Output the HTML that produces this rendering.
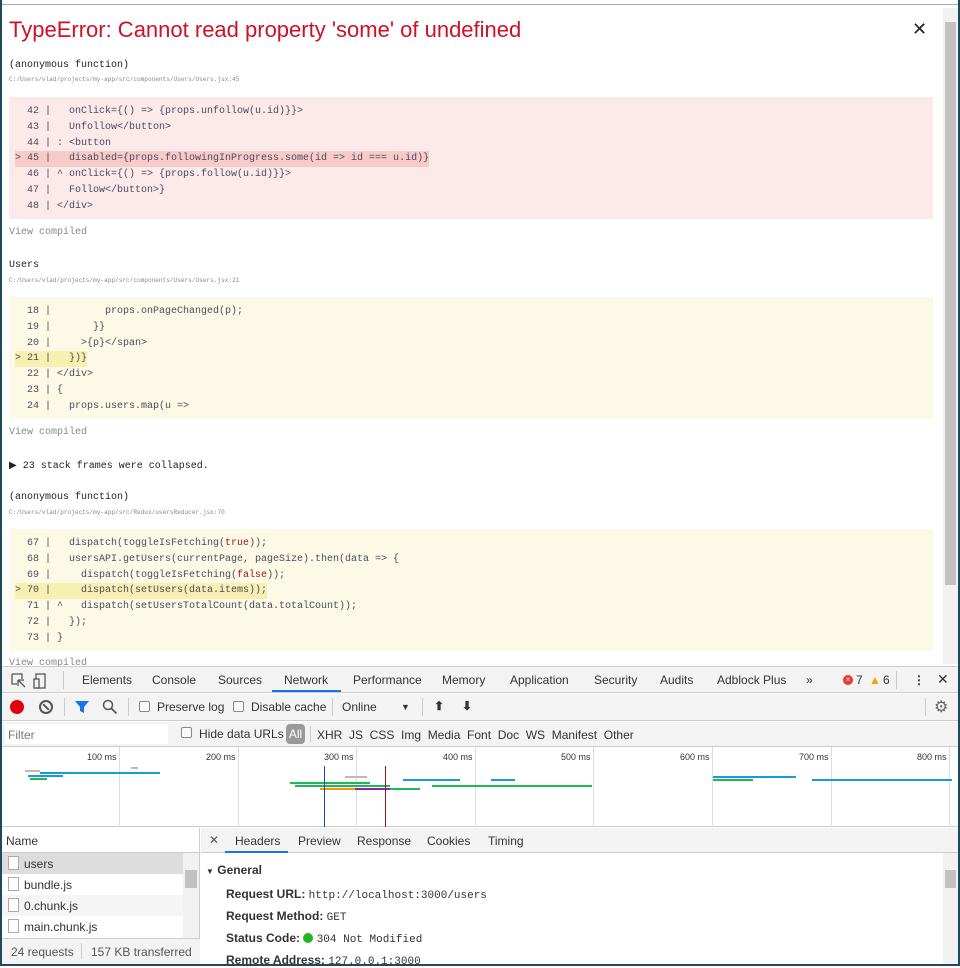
<!DOCTYPE html>
<html><head><meta charset="utf-8"><style>
*{margin:0;padding:0;box-sizing:border-box}
body{width:960px;height:966px;overflow:hidden;background:#fff;font-family:"Liberation Sans",sans-serif;position:relative}
.a{position:absolute}
.m{font-family:"Liberation Mono",monospace;white-space:pre}
.code{position:absolute;left:9px;width:924px;height:122px;padding-top:7px;font-size:10px;line-height:15.8px;color:#4b4b5c;font-family:"Liberation Mono",monospace}
.code div{height:15.8px;padding-left:6px;white-space:pre}
.hl{display:inline-block}
.pink{background:#fce9e9}.pink .hl{background:#f8caca}
.yel{background:#fcfae6}.yel .hl{background:#f8f0b2}
.k{color:#a31515}
.fn{font-size:10px;color:#222}
.path{font-size:6.1px;color:#888}
.vc{font-size:10px;color:#888}
.tab{position:absolute;top:673px;font-size:12px;color:#333}
.t2{font-size:12px;color:#333;position:absolute}
.bar{position:absolute;height:2px}
</style></head><body>
<div class="a" style="left:0;top:4px;width:960px;height:1px;background:#aaa"></div>
<div class="a" style="left:0;top:0;width:2px;height:966px;background:#1d4a5c"></div>
<div class="a" style="right:0;top:0;width:2px;height:966px;background:#1d4a5c"></div>
<div class="a" style="left:943px;top:8px;width:15px;height:656px;background:#f1f1f1"></div>
<div class="a" style="left:945px;top:22px;width:11px;height:563px;background:#c1c1c1"></div>
<div class="a" style="left:9px;top:17px;font-size:22px;color:#ce1126">TypeError: Cannot read property 'some' of undefined</div>
<div class="a" style="left:912px;top:19px;font-size:18px;color:#222">✕</div>

<div class="a m fn" style="left:9px;top:60px">(anonymous function)</div>
<div class="a m path" style="left:9px;top:76px">C:/Users/vlad/projects/my-app/src/components/Users/Users.jsx:45</div>
<div class="code pink" style="top:97px"><div>  42 |   onClick={() =&gt; {props.unfollow(u.id)}}&gt;</div><div>  43 |   Unfollow&lt;/button&gt;</div><div>  44 | : &lt;button</div><div><span class="hl">&gt; 45 |   disabled={props.followingInProgress.some(id =&gt; id === u.id)}</span></div><div>  46 | ^ onClick={() =&gt; {props.follow(u.id)}}&gt;</div><div>  47 |   Follow&lt;/button&gt;}</div><div>  48 | &lt;/div&gt;</div></div>
<div class="a m vc" style="left:9px;top:227px">View compiled</div>

<div class="a m fn" style="left:9px;top:260px">Users</div>
<div class="a m path" style="left:9px;top:277px">C:/Users/vlad/projects/my-app/src/components/Users/Users.jsx:21</div>
<div class="code yel" style="top:297px"><div>  18 |         props.onPageChanged(p);</div><div>  19 |       }}</div><div>  20 |     &gt;{p}&lt;/span&gt;</div><div><span class="hl">&gt; 21 |   })}</span></div><div>  22 | &lt;/div&gt;</div><div>  23 | {</div><div>  24 |   props.users.map(u =&gt;</div></div>
<div class="a m vc" style="left:9px;top:427px">View compiled</div>
<div class="a m fn" style="left:9px;top:460px">▶ 23 stack frames were collapsed.</div>

<div class="a m fn" style="left:9px;top:492px">(anonymous function)</div>
<div class="a m path" style="left:9px;top:509px">C:/Users/vlad/projects/my-app/src/Redux/usersReducer.jsx:70</div>
<div class="code yel" style="top:529px"><div>  67 |   dispatch(toggleIsFetching(<span class="k">true</span>));</div><div>  68 |   usersAPI.getUsers(currentPage, pageSize).then(data =&gt; {</div><div>  69 |     dispatch(toggleIsFetching(<span class="k">false</span>));</div><div><span class="hl">&gt; 70 |     dispatch(setUsers(data.items));</span></div><div>  71 | ^   dispatch(setUsersTotalCount(data.totalCount));</div><div>  72 |   });</div><div>  73 | }</div></div>
<div class="a m vc" style="left:9px;top:658px">View compiled</div>

<!-- devtools -->
<div class="a" style="left:2px;top:666px;width:956px;height:300px;background:#fff;border-top:1px solid #ccc"></div>
<div class="a" style="left:2px;top:667px;width:956px;height:26px;background:#f3f3f3;border-bottom:1px solid #ccc"></div>
<svg class="a" style="left:10px;top:672px" width="40" height="18"><path d="M2 2h10v5M2 2v10h5M8 8l7 7M8 8v6M8 8h6" stroke="#555" fill="none" stroke-width="1.3"/><rect x="26" y="2" width="9" height="14" fill="none" stroke="#555" stroke-width="1.3"/><rect x="24" y="7" width="5" height="9" fill="#f3f3f3" stroke="#555" stroke-width="1.3"/></svg>
<div class="a" style="left:63px;top:671px;width:1px;height:18px;background:#ccc"></div>
<div class="tab" style="left:82px">Elements</div>
<div class="tab" style="left:152px">Console</div>
<div class="tab" style="left:218px">Sources</div>
<div class="tab" style="left:284px">Network</div>
<div class="a" style="left:272px;top:690px;width:69px;height:2px;background:#1a73e8"></div>
<div class="tab" style="left:353px">Performance</div>
<div class="tab" style="left:442px">Memory</div>
<div class="tab" style="left:510px">Application</div>
<div class="tab" style="left:594px">Security</div>
<div class="tab" style="left:660px">Audits</div>
<div class="tab" style="left:717px">Adblock Plus</div>
<div class="tab" style="left:806px">»</div>
<div class="a" style="left:843px;top:675px;width:10px;height:10px;border-radius:50%;background:#e53935;color:#fff;font-size:8px;text-align:center;line-height:10px">×</div>
<div class="tab" style="left:856px">7</div>
<div class="tab" style="left:869px;color:#f2a600">▲</div><div class="tab" style="left:883px">6</div>
<div class="a" style="left:896px;top:671px;width:1px;height:18px;background:#ccc"></div>
<div class="tab" style="left:913px;font-weight:bold">⋮</div>
<div class="tab" style="left:937px;font-size:14px;top:671px">✕</div>

<div class="a" style="left:2px;top:694px;width:956px;height:27px;background:#f3f3f3;border-bottom:1px solid #ccc"></div>
<div class="a" style="left:10px;top:700px;width:14px;height:14px;border-radius:50%;background:#e0000e"></div>
<div class="a" style="left:39px;top:700px;width:14px;height:14px;border-radius:50%;border:2px solid #555"></div>
<div class="a" style="left:42px;top:706px;width:8px;height:2px;background:#555;transform:rotate(45deg)"></div>
<div class="a" style="left:64px;top:698px;width:1px;height:18px;background:#ccc"></div>
<svg class="a" style="left:74px;top:700px" width="16" height="14"><path d="M1 1h14l-5 6v6l-4-2v-4z" fill="#1a73e8"/></svg>
<svg class="a" style="left:102px;top:699px" width="16" height="16"><circle cx="6" cy="6" r="4.5" fill="none" stroke="#555" stroke-width="1.5"/><path d="M9.5 9.5l5 5" stroke="#555" stroke-width="1.8"/></svg>
<div class="a" style="left:128px;top:698px;width:1px;height:18px;background:#ccc"></div>
<div class="a" style="left:139px;top:701px;width:11px;height:11px;border:1px solid #888;background:#fafafa;border-radius:2px"></div>
<div class="t2" style="left:157px;top:700px">Preserve log</div>
<div class="a" style="left:233px;top:701px;width:11px;height:11px;border:1px solid #888;background:#fafafa;border-radius:2px"></div>
<div class="t2" style="left:251px;top:700px">Disable cache</div>
<div class="a" style="left:332px;top:698px;width:1px;height:18px;background:#ccc"></div>
<div class="t2" style="left:342px;top:700px">Online</div>
<div class="t2" style="left:401px;font-size:9px;top:702px">▼</div>
<div class="a" style="left:422px;top:698px;width:1px;height:18px;background:#ccc"></div>
<div class="t2" style="left:434px;top:699px;font-weight:bold">⬆</div>
<div class="t2" style="left:462px;top:699px;font-weight:bold">⬇</div>
<div class="a" style="left:925px;top:698px;width:1px;height:18px;background:#ccc"></div>
<div class="t2" style="left:934px;top:697px;font-size:16px;color:#666">⚙</div>

<div class="a" style="left:2px;top:722px;width:956px;height:25px;background:#f3f3f3;border-bottom:1px solid #ccc"></div>
<div class="a" style="left:5px;top:724px;width:163px;height:20px;background:#fff"></div>
<div class="t2" style="left:8px;top:728px;color:#777">Filter</div>
<div class="a" style="left:181px;top:727px;width:11px;height:11px;border:1px solid #888;background:#fafafa;border-radius:2px"></div>
<div class="t2" style="left:199px;top:727px">Hide data URLs</div>
<div class="a" style="left:286px;top:724px;width:19px;height:20px;background:#999;border-radius:4px;color:#fff;font-size:12px;text-align:center;line-height:20px">All</div>
<div class="a" style="left:310px;top:726px;width:1px;height:16px;background:#ccc"></div>
<div class="t2" style="left:317px;top:728px">XHR&nbsp;&nbsp;JS&nbsp;&nbsp;CSS&nbsp;&nbsp;Img&nbsp;&nbsp;Media&nbsp;&nbsp;Font&nbsp;&nbsp;Doc&nbsp;&nbsp;WS&nbsp;&nbsp;Manifest&nbsp;&nbsp;Other</div>

<!-- timeline -->
<div class="a" style="left:2px;top:747px;width:956px;height:80px;background:#fff;border-bottom:1px solid #ccc"></div>
<div class="a" style="left:119px;top:747px;width:1px;height:80px;background:#ddd"></div>
<div class="a" style="left:238px;top:747px;width:1px;height:80px;background:#ddd"></div>
<div class="a" style="left:356px;top:747px;width:1px;height:80px;background:#ddd"></div>
<div class="a" style="left:475px;top:747px;width:1px;height:80px;background:#ddd"></div>
<div class="a" style="left:593px;top:747px;width:1px;height:80px;background:#ddd"></div>
<div class="a" style="left:712px;top:747px;width:1px;height:80px;background:#ddd"></div>
<div class="a" style="left:831px;top:747px;width:1px;height:80px;background:#ddd"></div>
<div class="a" style="left:949px;top:747px;width:1px;height:80px;background:#ddd"></div>
<div class="a" style="font-size:9px;color:#333;top:752px;left:87px">100 ms</div>
<div class="a" style="font-size:9px;color:#333;top:752px;left:206px">200 ms</div>
<div class="a" style="font-size:9px;color:#333;top:752px;left:324px">300 ms</div>
<div class="a" style="font-size:9px;color:#333;top:752px;left:443px">400 ms</div>
<div class="a" style="font-size:9px;color:#333;top:752px;left:561px">500 ms</div>
<div class="a" style="font-size:9px;color:#333;top:752px;left:680px">600 ms</div>
<div class="a" style="font-size:9px;color:#333;top:752px;left:799px">700 ms</div>
<div class="a" style="font-size:9px;color:#333;top:752px;left:917px">800 ms</div>
<div class="bar" style="left:40px;top:772px;width:120px;background:#1a9ad6"></div>
<div class="bar" style="left:25px;top:770px;width:15px;background:#bbb"></div>
<div class="bar" style="left:28px;top:775px;width:35px;background:#1a9ad6"></div>
<div class="bar" style="left:30px;top:778px;width:17px;background:#1db954"></div>
<div class="bar" style="left:131px;top:767px;width:7px;background:#bbb"></div>
<div class="bar" style="left:290px;top:782px;width:80px;background:#1db954"></div>
<div class="bar" style="left:295px;top:785px;width:95px;background:#1db954"></div>
<div class="bar" style="left:320px;top:788px;width:35px;background:#f29900"></div>
<div class="bar" style="left:355px;top:788px;width:35px;background:#8e24aa"></div>
<div class="bar" style="left:390px;top:788px;width:30px;background:#1db954"></div>
<div class="bar" style="left:345px;top:776px;width:22px;background:#bbb"></div>
<div class="bar" style="left:403px;top:779px;width:57px;background:#1a9ad6"></div>
<div class="bar" style="left:432px;top:785px;width:160px;background:#1db954"></div>
<div class="bar" style="left:491px;top:779px;width:24px;background:#1a9ad6"></div>
<div class="bar" style="left:713px;top:776px;width:83px;background:#1a9ad6"></div>
<div class="bar" style="left:713px;top:779px;width:40px;background:#1db954"></div>
<div class="bar" style="left:812px;top:779px;width:140px;background:#1a9ad6"></div>
<div class="a" style="left:324px;top:766px;width:1px;height:61px;background:#1a4aa0"></div>
<div class="a" style="left:385px;top:766px;width:1px;height:61px;background:#8b1a1a"></div>

<!-- bottom panel -->
<div class="a" style="left:2px;top:828px;width:198px;height:138px;border-right:1px solid #ccc"></div>
<div class="t2" style="left:6px;top:834px">Name</div>
<div class="a" style="left:2px;top:852px;width:198px;height:1px;background:#ccc"></div>
<div class="a" style="left:2px;top:853px;width:181px;height:21px;background:#ddd"></div>
<div class="a" style="left:2px;top:895px;width:181px;height:21px;background:#f5f5f5"></div>
<div class="a" style="left:8px;top:856px;width:11px;height:14px;border:1px solid #aaa;background:#fff"></div>
<div class="a" style="left:8px;top:877px;width:11px;height:14px;border:1px solid #aaa;background:#fff"></div>
<div class="a" style="left:8px;top:898px;width:11px;height:14px;border:1px solid #aaa;background:#fff"></div>
<div class="a" style="left:8px;top:919px;width:11px;height:14px;border:1px solid #aaa;background:#fff"></div>
<div class="t2" style="left:24px;top:857px">users</div>
<div class="t2" style="left:24px;top:878px">bundle.js</div>
<div class="t2" style="left:24px;top:899px">0.chunk.js</div>
<div class="t2" style="left:24px;top:920px">main.chunk.js</div>
<div class="a" style="left:183px;top:853px;width:16px;height:85px;background:#f1f1f1"></div>
<div class="a" style="left:185px;top:870px;width:12px;height:18px;background:#c1c1c1"></div>
<div class="a" style="left:2px;top:938px;width:198px;height:28px;background:#f3f3f3;border-top:1px solid #ccc"></div>
<div class="t2" style="left:11px;top:945px;color:#555">24 requests</div>
<div class="a" style="left:81px;top:943px;width:1px;height:16px;background:#ccc"></div>
<div class="t2" style="left:91px;top:945px;color:#555">157 KB transferred</div>

<div class="a" style="left:201px;top:828px;width:757px;height:25px;background:#f3f3f3;border-bottom:1px solid #ccc"></div>
<div class="t2" style="left:209px;top:833px;color:#555">✕</div>
<div class="t2" style="left:235px;top:834px">Headers</div>
<div class="a" style="left:225px;top:851px;width:63px;height:2px;background:#1a73e8"></div>
<div class="t2" style="left:298px;top:834px">Preview</div>
<div class="t2" style="left:357px;top:834px">Response</div>
<div class="t2" style="left:427px;top:834px">Cookies</div>
<div class="t2" style="left:488px;top:834px">Timing</div>
<div class="t2" style="left:206px;top:863px;font-weight:bold"><span style="font-size:8px">▼</span> General</div>
<div class="t2" style="left:226px;top:887px;font-weight:bold">Request URL: <span class="m" style="font-weight:normal;font-size:11px">http://localhost:3000/users</span></div>
<div class="t2" style="left:226px;top:909px;font-weight:bold">Request Method: <span class="m" style="font-weight:normal;font-size:11px">GET</span></div>
<div class="t2" style="left:226px;top:931px;font-weight:bold">Status Code: <span style="display:inline-block;width:10px;height:10px;border-radius:50%;background:#22b422;vertical-align:-1px"></span> <span class="m" style="font-weight:normal;font-size:11px">304 Not Modified</span></div>
<div class="t2" style="left:226px;top:953px;font-weight:bold">Remote Address: <span class="m" style="font-weight:normal;font-size:11px">127.0.0.1:3000</span></div>
<div class="a" style="left:943px;top:853px;width:15px;height:113px;background:#f1f1f1"></div>
<div class="a" style="left:945px;top:870px;width:11px;height:18px;background:#c1c1c1"></div>
<div class="a" style="left:0;top:964px;width:960px;height:2px;background:#1d4a5c"></div>
</body></html>
